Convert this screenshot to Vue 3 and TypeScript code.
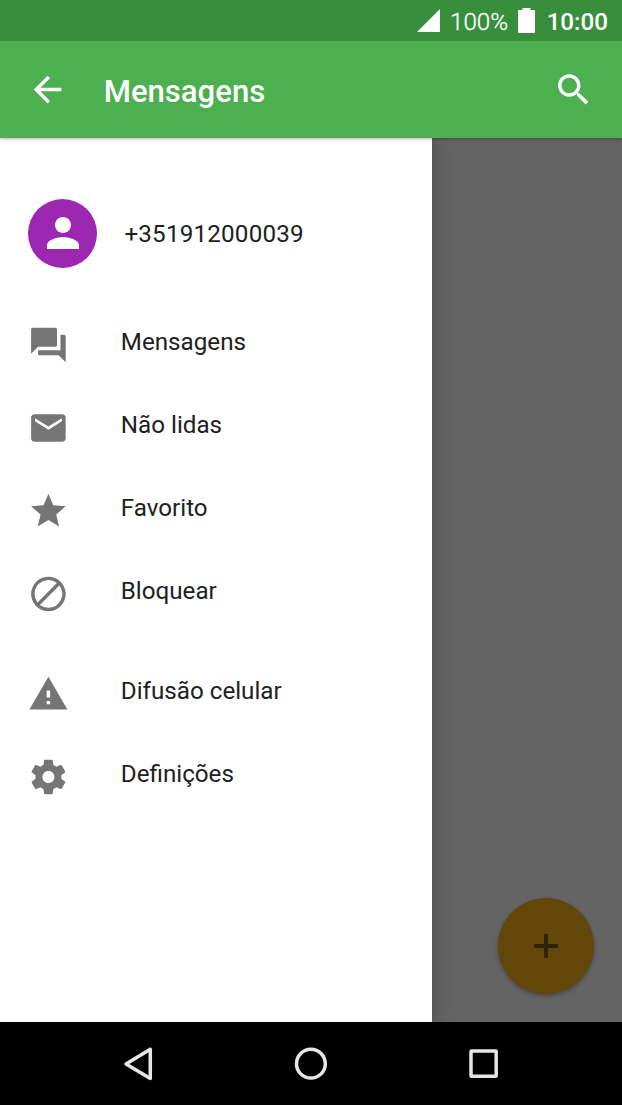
<script setup lang="ts">
interface MenuItem {
  id: string
  label: string
  path: string
}

const folders: MenuItem[] = [
  {
    id: 'all',
    label: 'Mensagens',
    path: 'M21 6h-2v9H6v2c0 .55.45 1 1 1h11l4 4V7c0-.55-.45-1-1-1zm-4 6V3c0-.55-.45-1-1-1H3c-.55 0-1 .45-1 1v14l4-4h10c.55 0 1-.45 1-1z',
  },
  {
    id: 'unread',
    label: 'Não lidas',
    path: 'M20 4H4c-1.1 0-1.99.9-1.99 2L2 18c0 1.1.9 2 2 2h16c1.1 0 2-.9 2-2V6c0-1.1-.9-2-2-2zm-.2 4.100l-7.800 4.900-7.800-4.900V6.300l7.800 4.800 7.800-4.800z',
  },
  {
    id: 'starred',
    label: 'Favorito',
    path: 'M12 17.27L18.18 21l-1.64-7.03L22 9.24l-7.19-.61L12 2 9.19 8.63 2 9.24l5.46 4.73L5.82 21z',
  },
  {
    id: 'blocked',
    label: 'Bloquear',
    path: 'M12 2a10 10 0 1 0 0 20 10 10 0 0 0 0-20zM4 12a8 8 0 0 1 12.9-6.31L5.69 16.9A7.9 7.9 0 0 1 4 12zm8 8a7.9 7.9 0 0 1-4.9-1.69L18.31 7.1A8 8 0 0 1 12 20z',
  },
]

const tools: MenuItem[] = [
  {
    id: 'broadcast',
    label: 'Difusão celular',
    path: 'M1 21h22L12 2 1 21zm12-3h-2v-2h2v2zm0-4h-2v-4h2v4z',
  },
  {
    id: 'settings',
    label: 'Definições',
    path: 'M19.43 12.98c.04-.32.07-.64.07-.98s-.03-.66-.07-.98l2.11-1.65c.19-.15.24-.42.12-.64l-2-3.46c-.12-.22-.39-.3-.61-.22l-2.49 1c-.52-.4-1.08-.73-1.69-.98l-.38-2.65C14.46 2.18 14.25 2 14 2h-4c-.25 0-.46.18-.49.42l-.38 2.65c-.61.25-1.17.59-1.69.98l-2.49-1c-.23-.09-.49 0-.61.22l-2 3.46c-.13.22-.07.49.12.64l2.11 1.65c-.04.32-.07.65-.07.98s.03.66.07.98l-2.11 1.65c-.19.15-.24.42-.12.64l2 3.46c.12.22.39.3.61.22l2.49-1c.52.4 1.08.73 1.69.98l.38 2.65c.03.24.24.42.49.42h4c.25 0 .46-.18.49-.42l.38-2.65c.61-.25 1.17-.59 1.69-.98l2.49 1c.23.09.49 0 .61-.22l2-3.46c.12-.22.07-.49-.12-.64l-2.11-1.65zM12 15.5c-1.93 0-3.5-1.57-3.5-3.5s1.57-3.5 3.5-3.5 3.5 1.57 3.5 3.5-1.57 3.5-3.5 3.5z',
  },
]

const groups: MenuItem[][] = [folders, tools]
</script>

<template>
  <div class="screen">
    <div class="status">
      <svg class="signal" viewBox="0 0 23 23"><path d="M23 0V23H0z" /></svg>
      <span class="percent">100%</span>
      <svg class="battery" viewBox="0 0 17 25"><path d="M4.5 0h8v2H16q1 0 1 1v21q0 1-1 1H1q-1 0-1-1V3q0-1 1-1h3.500z" /></svg>
      <span class="clock">10:00</span>
    </div>

    <header class="bar">
      <svg class="icon" viewBox="0.1 0.1 24.3 24.3"><path d="M20 11H7.830l5.590-5.590L12 4l-8 8 8 8 1.410-1.410L7.830 13H20v-2z" /></svg>
      <h1 class="title">Mensagens</h1>
      <svg class="icon" viewBox="0.1 0 24.3 24.3"><path d="M15.500 14h-.79l-.28-.27C15.410 12.590 16 11.110 16 9.500 16 5.910 13.090 3 9.500 3S3 5.910 3 9.500 5.910 16 9.500 16c1.610 0 3.090-.59 4.230-1.570l.27.28v.79l5 4.990L20.490 19l-4.990-5zm-6 0C7.010 14 5 11.990 5 9.500S7.010 5 9.500 5 14 7.010 14 9.500 11.990 14 9.500 14z" /></svg>
    </header>

    <div class="body">
      <nav class="drawer">
        <div class="account">
          <div class="avatar">
            <svg viewBox="0 0 24 24"><path d="M12 12c2.210 0 4-1.790 4-4s-1.790-4-4-4-4 1.790-4 4 1.790 4 4 4zm0 2c-2.670 0-8 1.340-8 4v2h16v-2c0-2.660-5.330-4-8-4z" /></svg>
          </div>
          <span class="phone">+351912000039</span>
        </div>
        <ul v-for="(group, i) in groups" :key="i" class="group">
          <li v-for="item in group" :key="item.id" class="item">
            <svg class="icon" viewBox="0.2 -0.15 24.3 24.3"><path :d="item.path" /></svg>
            <span class="label">{{ item.label }}</span>
          </li>
        </ul>
      </nav>
      <main class="scrim">
        <div class="fab">
          <svg viewBox="0 0 24 24"><path d="M10.100 0h3.800v10.100H24v3.800H13.900V24h-3.800V13.900H0v-3.800h10.100z" /></svg>
        </div>
      </main>
    </div>

    <footer class="system">
      <span class="key"><svg viewBox="0 0 36 36"><path d="M30.300 3.300v29.200L6 17.900z" /></svg></span>
      <span class="key"><svg viewBox="0 0 36 36"><circle cx="17.900" cy="17.700" r="14.400" /></svg></span>
      <span class="key"><svg viewBox="0 0 36 36"><rect x="5" y="5" width="25.200" height="25.200" rx="0.500" /></svg></span>
    </footer>
  </div>
</template>

<style>
body {
  margin: 0;
}
</style>

<style scoped>
.screen {
  display: flex;
  flex-direction: column;
  width: 622px;
  height: 1105px;
  overflow: hidden;
  font-family: Roboto, "Liberation Sans", sans-serif;
  background: #000;
}

svg {
  display: block;
  flex: none;
}

.status {
  display: flex;
  align-items: center;
  justify-content: flex-end;
  flex: none;
  position: relative;
  z-index: 3;
  box-sizing: border-box;
  height: 41px;
  padding-right: 14px;
  background: #388e3c;
  color: #fff;
  font-size: 24.2px;
  line-height: 28px;
  fill: #fff;
}

.signal {
  width: 23px;
  height: 23px;
  margin: 0 10px 1px 0;
}

.percent {
  margin-top: 2px;
  font-weight: 300;
  -webkit-text-stroke: 0.3px #fff;
}

.battery {
  width: 17px;
  height: 25px;
  margin: 0 12px 0 9.5px;
}

.clock {
  margin-top: 2px;
  font-weight: 500;
}

.bar {
  display: flex;
  align-items: center;
  flex: none;
  position: relative;
  z-index: 2;
  box-sizing: border-box;
  height: 97px;
  padding: 0 27px;
  background: #4caf50;
  box-shadow: 0 1px 3px rgba(0, 0, 0, 0.3);
  color: #fff;
  fill: #fff;
}

.icon {
  width: 42px;
  height: 42px;
}

.title {
  flex: 1;
  margin: 4px 0 0 34.7px;
  font-size: 31.1px;
  line-height: 36px;
  font-weight: 500;
}

.body {
  display: flex;
  flex: 1;
}

.drawer {
  flex: none;
  position: relative;
  z-index: 1;
  box-sizing: border-box;
  width: 432px;
  padding: 60px 0 0 28px;
  background: #fff;
  box-shadow: 0 0 18px rgba(0, 0, 0, 0.3);
  color: #212121;
  font-size: 24.2px;
  line-height: 28px;
}

.account {
  display: flex;
  align-items: center;
  height: 70px;
  margin-bottom: 35.500px;
}

.avatar {
  display: flex;
  align-items: center;
  justify-content: center;
  width: 69px;
  height: 69px;
  border-radius: 50%;
  background: #9c27b0;
  fill: #fff;
}

.avatar svg {
  width: 48px;
  height: 48px;
}

.phone {
  margin-left: 27.4px;
  padding-top: 2px;
  letter-spacing: 0.2px;
}

.group {
  margin: 0 0 17px;
  padding: 0;
  list-style: none;
}

.item {
  display: flex;
  align-items: center;
  height: 83px;
  fill: #757575;
}

.label {
  margin-left: 50.8px;
  padding-bottom: 6.5px;
}

.scrim {
  display: flex;
  flex: 1;
  align-items: flex-end;
  justify-content: flex-end;
  padding: 0 27.700px 27.700px 0;
  background: #646464;
}

.fab {
  display: flex;
  align-items: center;
  justify-content: center;
  width: 96.7px;
  height: 96.7px;
  border-radius: 50%;
  background: #62460a;
  box-shadow: 0 2px 4px rgba(0, 0, 0, 0.3);
  fill: #302205;
}

.fab svg {
  width: 24px;
  height: 24px;
}

.system {
  display: flex;
  align-items: center;
  justify-content: center;
  flex: none;
  height: 83px;
  background: #000;
}

.key {
  display: flex;
  justify-content: center;
  width: 173px;
}

.key svg {
  width: 36px;
  height: 36px;
  fill: none;
  stroke: #e6e6e6;
  stroke-width: 3.5;
  stroke-linejoin: round;
}
</style>
